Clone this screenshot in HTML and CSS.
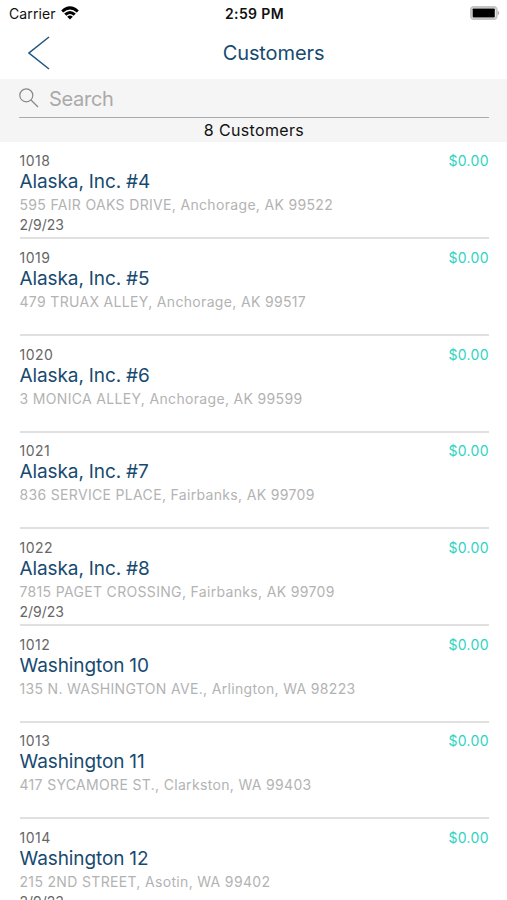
FILE: index.html
```
<!DOCTYPE html>
<html lang="en">
<head>
    <meta charset="UTF-8">
    <meta name="viewport" content="width=device-width, initial-scale=1.0">
    <title>Customers</title>
    <link rel="stylesheet" href="styles.css">
</head>
<body>
    <header class="status-bar">
        <div class="carrier">
            <span>Carrier</span>
            <svg class="wifi" viewBox="0 0 18 14" width="18" height="14">
                <path d="M0.2 4.5 Q9 -3.8 17.8 4.5 L15.8 6.6 Q9 0.4 2.2 6.6 Z"/>
                <path d="M3.2 7.6 Q9 2.2 14.8 7.6 L12.7 9.7 Q9 6.4 5.3 9.7 Z"/>
                <path d="M6.2 10.7 Q9 8.4 11.8 10.7 L9 13.6 Z"/>
            </svg>
        </div>
        <span class="clock">2:59 PM</span>
        <svg class="battery" viewBox="0 0 30 14" width="30" height="14">
            <rect x="1" y="1" width="25.6" height="12" rx="3" fill="#fff" stroke="#c4c4c4" stroke-width="2"/>
            <rect x="2.6" y="2.4" width="22.2" height="9" rx="0.8" fill="#000"/>
            <path d="M27.7 4.6 Q31 7 27.7 9.4 Z" fill="#b0b0b0"/>
        </svg>
    </header>

    <nav class="nav-bar">
        <svg class="back" viewBox="0 0 22 34" width="22" height="34">
            <path d="M21 1 L1 17 L21 33"/>
        </svg>
        <h1>Customers</h1>
    </nav>

    <section class="search">
        <div class="search-field">
            <svg viewBox="0 0 20 20" width="20" height="20">
                <circle cx="7.3" cy="7.3" r="6.5"/>
                <path d="M12 12 L19 19"/>
            </svg>
            <span>Search</span>
        </div>
        <p class="count">8 Customers</p>
    </section>

    <ul class="customers">
        <li>
            <div class="row"><span>1018</span><span class="balance">$0.00</span></div>
            <h2>Alaska, Inc. #4</h2>
            <p class="address">595 FAIR OAKS DRIVE, Anchorage, AK 99522</p>
            <p class="date">2/9/23</p>
        </li>
        <li>
            <div class="row"><span>1019</span><span class="balance">$0.00</span></div>
            <h2>Alaska, Inc. #5</h2>
            <p class="address">479 TRUAX ALLEY, Anchorage, AK 99517</p>
        </li>
        <li>
            <div class="row"><span>1020</span><span class="balance">$0.00</span></div>
            <h2>Alaska, Inc. #6</h2>
            <p class="address">3 MONICA ALLEY, Anchorage, AK 99599</p>
        </li>
        <li>
            <div class="row"><span>1021</span><span class="balance">$0.00</span></div>
            <h2>Alaska, Inc. #7</h2>
            <p class="address">836 SERVICE PLACE, Fairbanks, AK 99709</p>
        </li>
        <li>
            <div class="row"><span>1022</span><span class="balance">$0.00</span></div>
            <h2>Alaska, Inc. #8</h2>
            <p class="address">7815 PAGET CROSSING, Fairbanks, AK 99709</p>
            <p class="date">2/9/23</p>
        </li>
        <li>
            <div class="row"><span>1012</span><span class="balance">$0.00</span></div>
            <h2>Washington 10</h2>
            <p class="address">135 N. WASHINGTON AVE., Arlington, WA 98223</p>
        </li>
        <li>
            <div class="row"><span>1013</span><span class="balance">$0.00</span></div>
            <h2>Washington 11</h2>
            <p class="address">417 SYCAMORE ST., Clarkston, WA 99403</p>
        </li>
        <li>
            <div class="row"><span>1014</span><span class="balance">$0.00</span></div>
            <h2>Washington 12</h2>
            <p class="address">215 2ND STREET, Asotin, WA 99402</p>
            <p class="date">2/9/23</p>
        </li>
    </ul>
</body>
</html>
```

FILE: styles.css
```
* {
    box-sizing: border-box;
    margin: 0;
    padding: 0;
}
body {
    height: 900px;
    overflow: hidden;
    background: #fff;
    font-family: Inter, sans-serif;
    color: #111;
}
.status-bar {
    display: grid;
    grid-template-columns: 1fr auto 1fr;
    align-items: center;
    height: 27px;
    padding: 0 7px 0 9px;
    font-size: 14px;
}
.carrier {
    display: flex;
    align-items: center;
    gap: 5px;
    letter-spacing: 0.1px;
}
.wifi {
    fill: #000;
    margin-bottom: 1px;
}
.clock {
    font-weight: 600;
    letter-spacing: 0.4px;
}
.battery {
    justify-self: end;
    margin-bottom: 1px;
}
.nav-bar {
    display: grid;
    grid-template-columns: 80px 1fr 40px;
    align-items: center;
    height: 52px;
}
.back {
    margin-left: 28px;
    fill: none;
    stroke: #1f5580;
    stroke-width: 1.5;
}
.nav-bar h1 {
    font-size: 20px;
    font-weight: 400;
    letter-spacing: -0.1px;
    text-align: center;
    color: #174a70;
}
.search {
    height: 63px;
    padding: 0 18px 0 19px;
    background: #f5f5f5;
}
.search-field {
    display: flex;
    align-items: center;
    gap: 10px;
    height: 39px;
    border-bottom: 1px solid #aaa;
    font-size: 20px;
    letter-spacing: -0.3px;
    color: #aaa;
}
.search-field span {
    padding-top: 2px;
}
.search-field svg {
    fill: none;
    stroke: #888;
    stroke-width: 1.2;
}
.count {
    font-size: 16px;
    letter-spacing: 0.35px;
    line-height: 25px;
    text-align: center;
}
.customers {
    list-style: none;
    padding: 0 18px 0 19.5px;
}
.customers li {
    height: 96.65px;
    padding-top: 9.6px;
    border-bottom: 2px solid #e0e0e0;
}
/* the first row sits a little lower, under the search bar */
.customers li:first-child {
    height: 97.4px;
    padding-top: 10.4px;
}
.row {
    display: flex;
    justify-content: space-between;
    font-size: 14px;
    letter-spacing: 0.5px;
    line-height: 18px;
    color: #666;
}
.balance {
    letter-spacing: 0.35px;
    color: #2fd3c2;
}
.customers h2 {
    font-size: 19px;
    font-weight: 400;
    letter-spacing: -0.1px;
    word-spacing: -0.2px;
    line-height: 23px;
    color: #174a70;
}
.address {
    font-size: 14px;
    letter-spacing: 0.33px;
    line-height: 24px;
    color: #b3b3b3;
}
.date {
    font-size: 14px;
    line-height: 16px;
    color: #666;
}
```
